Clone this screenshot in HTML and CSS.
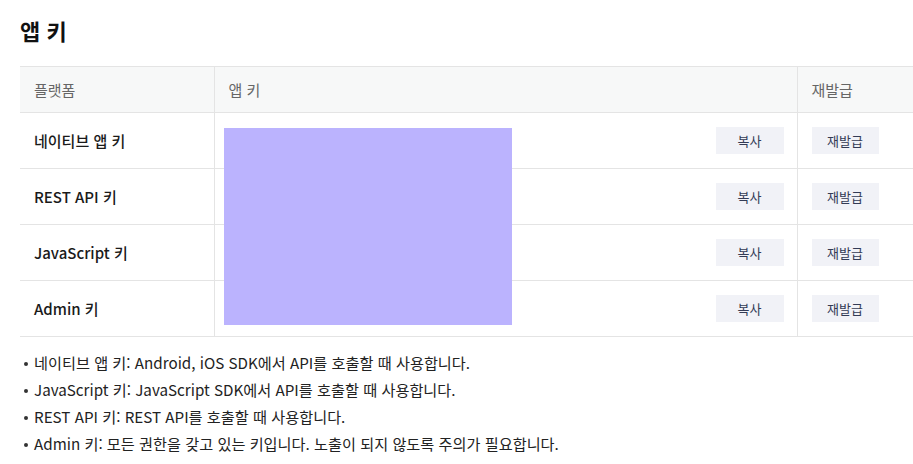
FILE: index.html
```html
<!DOCTYPE html>
<html lang="ko">
<head>
<meta charset="utf-8">
<title>앱 키</title>
<link rel="stylesheet" href="styles.css">
</head>
<body>
<main class="page">
  <h2 class="title">앱 키</h2>
  <div class="table-wrap">
    <table class="keys">
      <colgroup>
        <col class="c1"><col class="c2"><col class="c3">
      </colgroup>
      <thead>
        <tr><th>플랫폼</th><th>앱 키</th><th>재발급</th></tr>
      </thead>
      <tbody>
        <tr><td class="name">네이티브 앱 키</td><td class="key"><button class="btn">복사</button></td><td><button class="btn btn-re">재발급</button></td></tr>
        <tr><td class="name">REST API 키</td><td class="key"><button class="btn">복사</button></td><td><button class="btn btn-re">재발급</button></td></tr>
        <tr><td class="name">JavaScript 키</td><td class="key"><button class="btn">복사</button></td><td><button class="btn btn-re">재발급</button></td></tr>
        <tr><td class="name">Admin 키</td><td class="key"><button class="btn">복사</button></td><td><button class="btn btn-re">재발급</button></td></tr>
      </tbody>
    </table>
    <div class="redact"></div>
  </div>
  <ul class="notes">
    <li>네이티브 앱 키: Android, iOS SDK에서 API를 호출할 때 사용합니다.</li>
    <li>JavaScript 키: JavaScript SDK에서 API를 호출할 때 사용합니다.</li>
    <li>REST API 키: REST API를 호출할 때 사용합니다.</li>
    <li>Admin 키: 모든 권한을 갖고 있는 키입니다. 노출이 되지 않도록 주의가 필요합니다.</li>
  </ul>
</main>
</body>
</html>
```
FILE: styles.css
```css
* { box-sizing: border-box; }
html, body { margin: 0; padding: 0; background: #fff; overflow: hidden; }
body {
  font-family: "Noto Sans CJK KR", "Noto Sans", sans-serif;
  color: #222;
}
.page { padding: 14px 0 0 20px; }
.title {
  margin: 0;
  font-size: 22px;
  font-weight: 700;
  line-height: 32px;
  color: #111;
}
.table-wrap { position: relative; margin-top: 20px; }
.keys {
  width: 893px;
  border-collapse: collapse;
  table-layout: fixed;
}
.c1 { width: 194px; }
.c2 { width: 583px; }
.c3 { width: 116px; }
.keys th, .keys td {
  border-top: 1px solid #e4e4e4;
  border-bottom: 1px solid #e4e4e4;
  border-left: 1px solid #e4e4e4;
  padding: 0 14px;
  text-align: left;
  font-size: 15px;
}
.keys th:first-child, .keys td:first-child { border-left: 0; }
.keys th {
  height: 46px;
  background: #f7f8f8;
  color: #666;
  font-weight: 400;
}
.keys td { height: 56px; }
.keys td.name { font-weight: 500; color: #1a1a1a; }
.keys td.key { text-align: right; padding-right: 13px; }
.btn {
  font-family: inherit;
  font-size: 13px;
  color: #333b55;
  background: #f1f2f7;
  border: 0;
  height: 27px;
  width: 68px;
  padding: 0;
  cursor: pointer;
}
.btn-re { width: 67px; }
.redact {
  position: absolute;
  left: 204px;
  top: 62px;
  width: 288px;
  height: 197px;
  background: #bbb3fe;
}
.notes {
  margin: 12px 0 0;
  padding: 0 0 0 14px;
  list-style: none;
  font-size: 15.2px;
  line-height: 27px;
  color: #222;
}
.notes li { position: relative; }
.notes li::before {
  content: "";
  position: absolute;
  left: -10px;
  top: 13px;
  width: 4px;
  height: 4px;
  border-radius: 50%;
  background: #333;
}
```
